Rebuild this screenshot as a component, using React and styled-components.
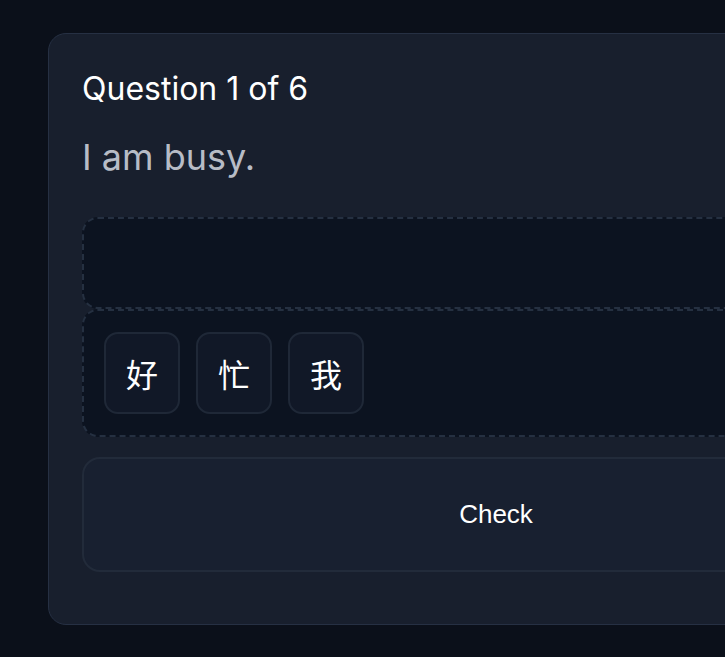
import React, { useState } from "react";
import styled, { createGlobalStyle } from "styled-components";

const GlobalStyle = createGlobalStyle`
  html, body {
    margin: 0;
    background: #0b101a;
  }
  body {
    font-family: Inter, "Noto Sans CJK SC", sans-serif;
    color: #f3f4f6;
  }
`;

const Page = styled.main`
  padding: 33px 48px 32px;
  width: 896px;
`;

const Card = styled.section`
  display: flex;
  flex-direction: column;
  background: #181f2d;
  border: 1px solid #263043;
  border-radius: 18px;
  padding: 35px 33px 52px;
`;

const Title = styled.h2`
  margin: 0;
  font-size: 32px;
  font-weight: 400;
  line-height: 40px;
  color: #ffffff;
`;

const Prompt = styled.p`
  margin: 26px 0 0;
  font-size: 36px;
  line-height: 44px;
  color: #b7bcc6;
`;

const Zone = styled.div`
  display: flex;
  flex-wrap: wrap;
  gap: 16px;
  align-items: center;
  min-height: ${({ $min }) => $min}px;
  padding: 20px;
  box-sizing: border-box;
  background: #0c1320;
  border: 2px dashed #253041;
  border-radius: 16px;
  margin-top: ${({ $top }) => $top || 0}px;
`;

const Tile = styled.button`
  width: 76px;
  height: 82px;
  display: flex;
  align-items: center;
  justify-content: center;
  padding: 0;
  background: #111827;
  border: 2px solid #1f2837;
  border-radius: 14px;
  color: #ffffff;
  font-family: "Noto Sans CJK SC", sans-serif;
  font-size: 32px;
  cursor: pointer;
`;

const CheckButton = styled.button`
  margin-top: 20px;
  height: 115px;
  background: #182030;
  border: 2px solid #222b3a;
  border-radius: 18px;
  color: #ffffff;
  font-family: "Liberation Sans", Arial, sans-serif;
  font-size: 26px;
  cursor: pointer;
`;

export default function App() {
  const [bank, setBank] = useState(["好", "忙", "我"]);
  const [answer, setAnswer] = useState([]);

  const pick = (i) => {
    setAnswer([...answer, bank[i]]);
    setBank(bank.filter((_, j) => j !== i));
  };
  const unpick = (i) => {
    setBank([...bank, answer[i]]);
    setAnswer(answer.filter((_, j) => j !== i));
  };

  return (
    <>
      <GlobalStyle />
      <Page>
        <Card>
          <Title>Question 1 of 6</Title>
          <Prompt>I am busy.</Prompt>
          <Zone $min={92} $top={38}>
            {answer.map((w, i) => (
              <Tile key={w} onClick={() => unpick(i)}>{w}</Tile>
            ))}
          </Zone>
          <Zone $min={128}>
            {bank.map((w, i) => (
              <Tile key={w} onClick={() => pick(i)}>{w}</Tile>
            ))}
          </Zone>
          <CheckButton>Check</CheckButton>
        </Card>
      </Page>
    </>
  );
}
